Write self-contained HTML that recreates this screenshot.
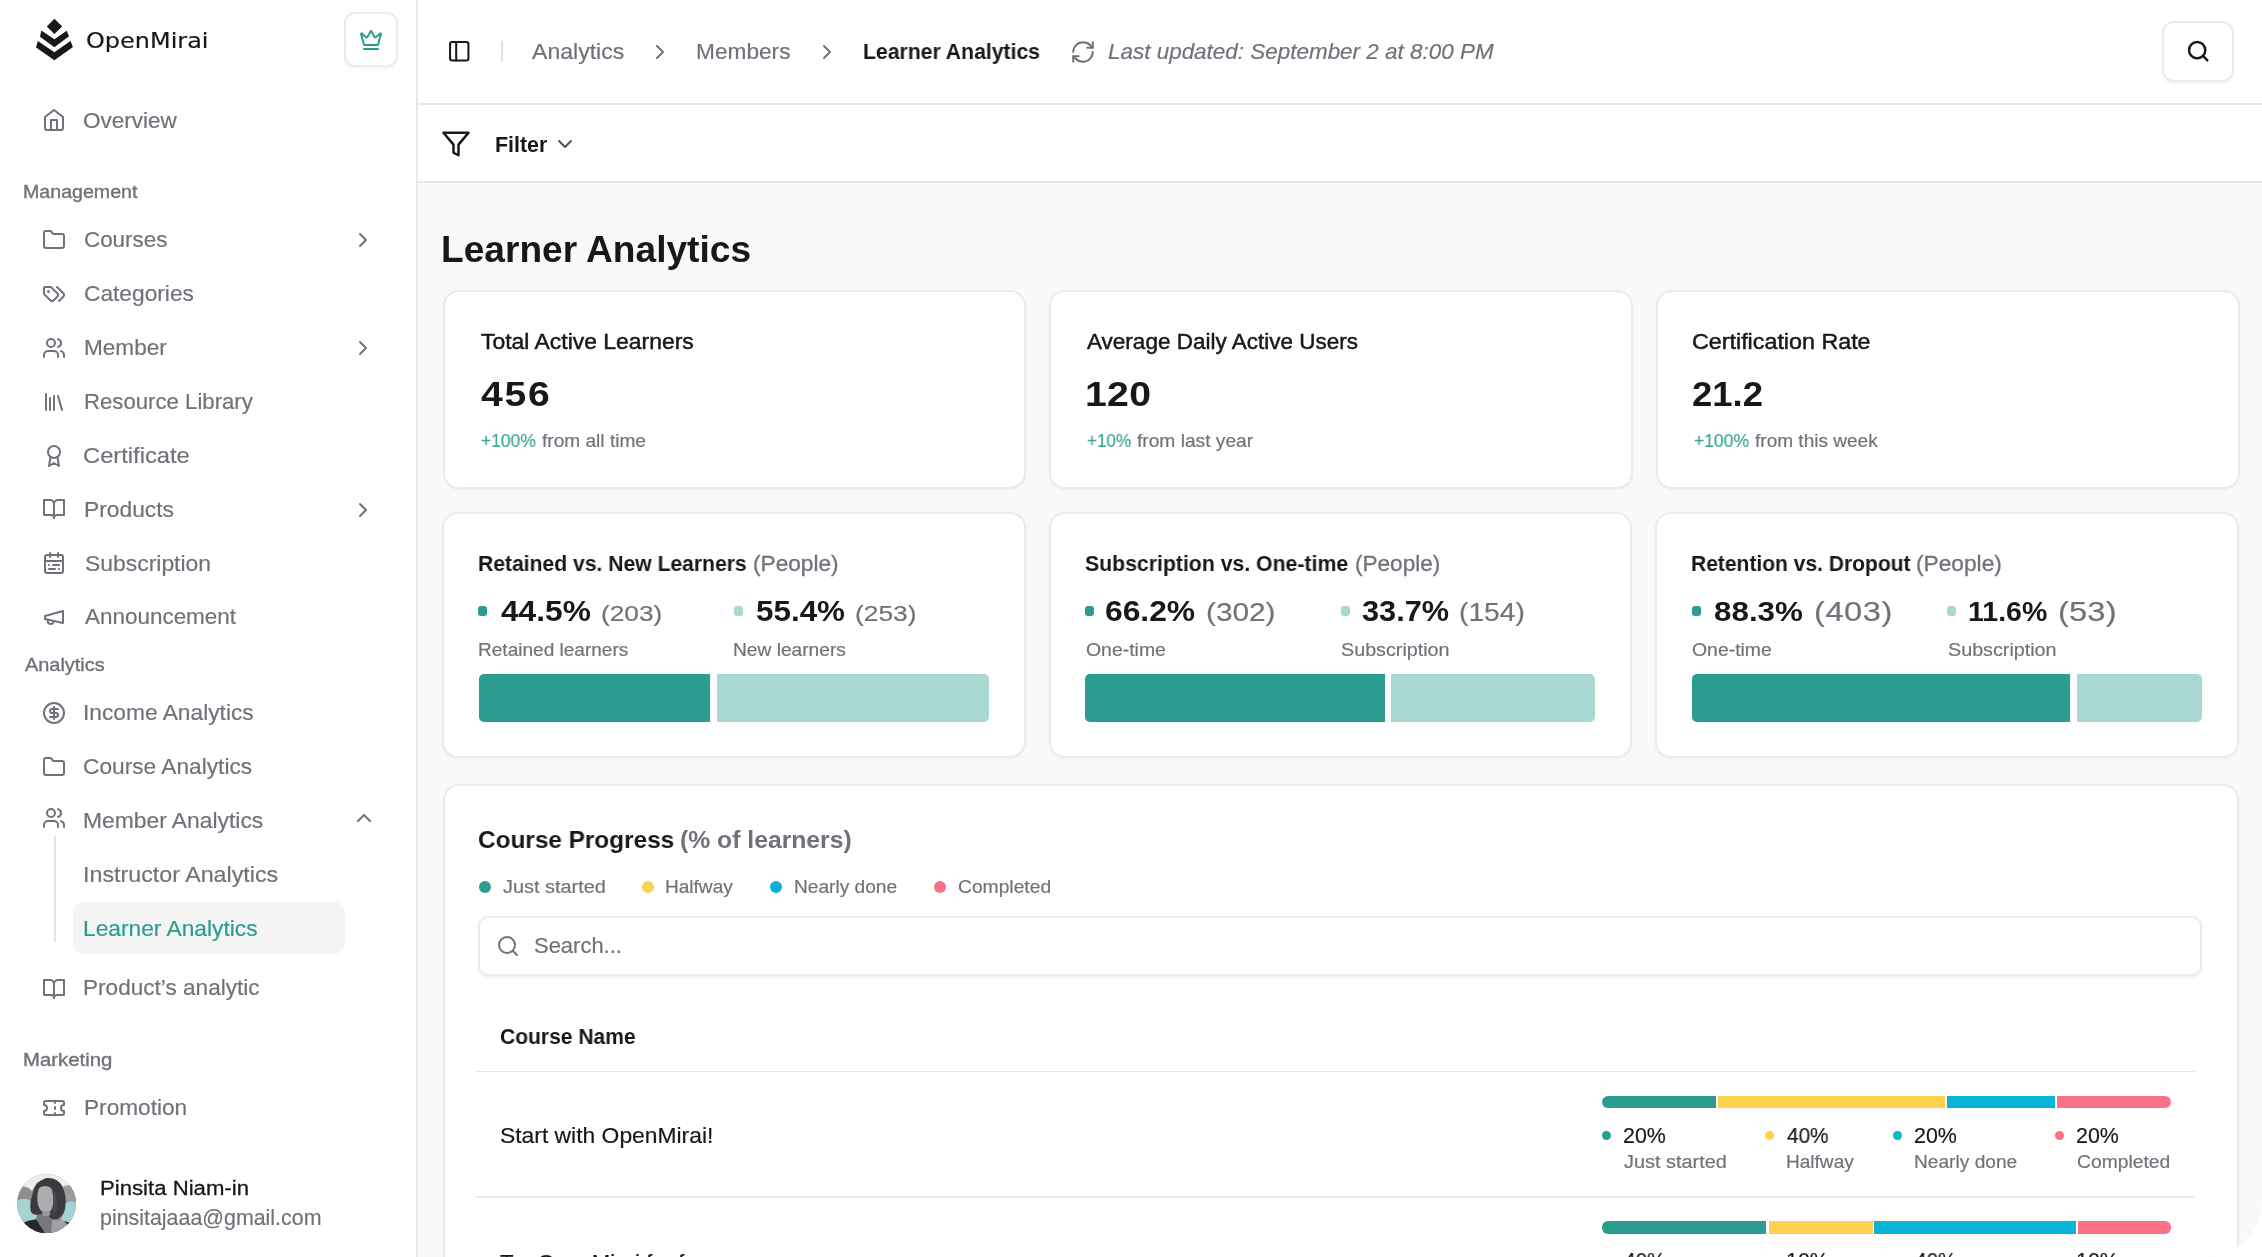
<!DOCTYPE html>
<html lang="en">
<head>
<meta charset="utf-8">
<title>OpenMirai – Learner Analytics</title>
<style>
html,body{margin:0;padding:0;background:#fff;}
body{width:2262px;height:1257px;overflow:hidden;font-family:"Liberation Sans", sans-serif;}
#app{position:absolute;left:0;top:0;width:2262px;height:1257px;overflow:hidden;border-radius:56px;background:#f8f9fa;}
.b{position:absolute;box-sizing:border-box;}
.t{position:absolute;white-space:pre;margin:0;font-weight:400;display:block;transform-origin:0 50%;will-change:transform;}
.ic{position:absolute;overflow:visible;}
</style>
</head>
<body>
<div id="app">
<aside>
<div class="b" style="left:0px;top:0px;width:418px;height:1257px;background:#fff;border-right:2px solid #e8e8ec;"></div>
<div class="b" style="left:343.6px;top:12px;width:54.4px;height:55px;background:#fff;border:2px solid #ebebee;border-radius:11px;box-shadow:0 1.5px 2.5px rgba(24,24,27,.05);"></div>
<div class="b" style="left:72.5px;top:901.7px;width:272.8px;height:52.7px;background:#f4f4f5;border-radius:10px;"></div>
<svg class="ic" style="left:30px;top:12px" width="50" height="54" viewBox="30 12 50 54"><g fill="#18181b">
<path d="M54.4 18.7 62.2 26.4 54.4 34.1 46.8 26.4Z"/>
<path d="M41.3 30.6 54.4 39.2 66.7 30.8 69 36.3 54.4 47.2 40 36.8Z"/>
<path d="M37.8 41 54.4 52.2 70.4 41 73 47 54.4 60.2 36 47.4Z"/>
</g></svg>
<svg class="ic" style="left:17.4px;top:1173.5px" width="59.2" height="59.2" viewBox="0 0 59 59">
<defs><clipPath id="av"><circle cx="29.5" cy="29.5" r="29.5"/></clipPath></defs>
<g clip-path="url(#av)">
<rect width="59" height="59" fill="#8f8f93"/>
<path d="M0 0H59V13Q52 10 46 16L40 8H20L15 17Q8 10 0 14Z" fill="#eceeee"/>
<path d="M45 13Q53 9 59 14V30Q52 24 45 30Z" fill="#9c9ca0"/>
<path d="M0 27Q6 23 12 26L20 30V46L8 48L0 42Z" fill="#a6d3d0"/>
<path d="M59 29Q52 25 47 30L44 46L52 48L59 42Z" fill="#a0d2cf"/>
<path d="M20 40H40L44 59H16Z" fill="#79797d"/>
<path d="M35 46Q45 45 52 49L56 59H34Z" fill="#a2a2a6"/>
<path d="M6 49Q10 46 19 45L28 59H8Z" fill="#27272b"/>
<path d="M47 47L53 48.5L51 51Z" fill="#2c2c30"/>
<path d="M29 4Q40 3 45 12Q50 22 48 34Q47 42 40 45Q33 46 31 40L22 40Q16 42 14 38Q12 30 15 22Q17 8 29 4Z" fill="#3b3b3f"/>
<path d="M22 14Q28 10 34 14Q37 20 36 30Q35 38 29 40Q23 38 21 31Q19 22 22 14Z" fill="#acacaf"/>
<path d="M34 13Q40 18 40 30Q40 40 34 42Q37 34 36 26Q36 18 34 13Z" fill="#4a4a4e"/>
<path d="M25 36Q29 38 33 36L33 41Q29 43 25 41Z" fill="#98989c"/>
</g></svg>
<div class="b" style="left:54px;top:835.7px;width:1.5px;height:106.6px;background:#e4e4e7;"></div>
<svg class="ic" style="left:42.0px;top:108.3px;color:#71717a" width="24" height="24" viewBox="0 0 24 24" fill="none" stroke="currentColor" stroke-width="2" stroke-linecap="round" stroke-linejoin="round"><path d="m3 9 9-7 9 7v11a2 2 0 0 1-2 2H5a2 2 0 0 1-2-2z"/><path d="M9 22V12h6v10"/></svg>
<svg class="ic" style="left:42.0px;top:228.2px;color:#71717a" width="24" height="24" viewBox="0 0 24 24" fill="none" stroke="currentColor" stroke-width="2" stroke-linecap="round" stroke-linejoin="round"><path d="M20 20a2 2 0 0 0 2-2V8a2 2 0 0 0-2-2h-7.9a2 2 0 0 1-1.69-.9L9.6 3.9A2 2 0 0 0 7.93 3H4a2 2 0 0 0-2 2v13a2 2 0 0 0 2 2Z"/></svg>
<svg class="ic" style="left:42.0px;top:282.1px;color:#71717a" width="24" height="24" viewBox="0 0 24 24" fill="none" stroke="currentColor" stroke-width="2" stroke-linecap="round" stroke-linejoin="round"><path d="m15 5 6.3 6.3a2.4 2.4 0 0 1 0 3.4L17 19"/><path d="M9.586 5.586A2 2 0 0 0 8.172 5H3a1 1 0 0 0-1 1v5.172a2 2 0 0 0 .586 1.414L8.29 18.29a2.426 2.426 0 0 0 3.42 0l3.58-3.58a2.426 2.426 0 0 0 0-3.42z"/><circle cx="6.5" cy="9.5" r=".5" fill="currentColor"/></svg>
<svg class="ic" style="left:42.0px;top:335.9px;color:#71717a" width="24" height="24" viewBox="0 0 24 24" fill="none" stroke="currentColor" stroke-width="2" stroke-linecap="round" stroke-linejoin="round"><path d="M16 21v-2a4 4 0 0 0-4-4H6a4 4 0 0 0-4 4v2"/><circle cx="9" cy="7" r="4"/><path d="M22 21v-2a4 4 0 0 0-3-3.87"/><path d="M16 3.13a4 4 0 0 1 0 7.75"/></svg>
<svg class="ic" style="left:42.0px;top:389.8px;color:#71717a" width="24" height="24" viewBox="0 0 24 24" fill="none" stroke="currentColor" stroke-width="2" stroke-linecap="round" stroke-linejoin="round"><path d="m16 6 4 14"/><path d="M12 6v14"/><path d="M8 8v12"/><path d="M4 4v16"/></svg>
<svg class="ic" style="left:42.0px;top:443.6px;color:#71717a" width="24" height="24" viewBox="0 0 24 24" fill="none" stroke="currentColor" stroke-width="2" stroke-linecap="round" stroke-linejoin="round"><circle cx="12" cy="8" r="6"/><path d="M15.477 12.89 17 22l-5-3-5 3 1.523-9.11"/></svg>
<svg class="ic" style="left:42.0px;top:497.4px;color:#71717a" width="24" height="24" viewBox="0 0 24 24" fill="none" stroke="currentColor" stroke-width="2" stroke-linecap="round" stroke-linejoin="round"><path d="M2 3h6a4 4 0 0 1 4 4v14a3 3 0 0 0-3-3H2z"/><path d="M22 3h-6a4 4 0 0 0-4 4v14a3 3 0 0 1 3-3h7z"/></svg>
<svg class="ic" style="left:42.0px;top:551.3px;color:#71717a" width="24" height="24" viewBox="0 0 24 24" fill="none" stroke="currentColor" stroke-width="2" stroke-linecap="round" stroke-linejoin="round"><rect width="18" height="18" x="3" y="4" rx="2"/><path d="M16 2v4"/><path d="M3 10h18"/><path d="M8 2v4"/><path d="M17 14h-6"/><path d="M13 18H7"/><path d="M7 14h.01"/><path d="M17 18h.01"/></svg>
<svg class="ic" style="left:42.0px;top:605.1px;color:#71717a" width="24" height="24" viewBox="0 0 24 24" fill="none" stroke="currentColor" stroke-width="2" stroke-linecap="round" stroke-linejoin="round"><path d="m3 11 18-5v12L3 14v-3z"/><path d="M11.6 16.8a3 3 0 1 1-5.8-1.6"/></svg>
<svg class="ic" style="left:42.0px;top:701.2px;color:#71717a" width="24" height="24" viewBox="0 0 24 24" fill="none" stroke="currentColor" stroke-width="2" stroke-linecap="round" stroke-linejoin="round"><circle cx="12" cy="12" r="10"/><path d="M16 8h-6a2 2 0 1 0 0 4h4a2 2 0 1 1 0 4H8"/><path d="M12 18V6"/></svg>
<svg class="ic" style="left:42.0px;top:755.0px;color:#71717a" width="24" height="24" viewBox="0 0 24 24" fill="none" stroke="currentColor" stroke-width="2" stroke-linecap="round" stroke-linejoin="round"><path d="M20 20a2 2 0 0 0 2-2V8a2 2 0 0 0-2-2h-7.9a2 2 0 0 1-1.69-.9L9.6 3.9A2 2 0 0 0 7.93 3H4a2 2 0 0 0-2 2v13a2 2 0 0 0 2 2Z"/></svg>
<svg class="ic" style="left:42.0px;top:806.2px;color:#71717a" width="24" height="24" viewBox="0 0 24 24" fill="none" stroke="currentColor" stroke-width="2" stroke-linecap="round" stroke-linejoin="round"><path d="M16 21v-2a4 4 0 0 0-4-4H6a4 4 0 0 0-4 4v2"/><circle cx="9" cy="7" r="4"/><path d="M22 21v-2a4 4 0 0 0-3-3.87"/><path d="M16 3.13a4 4 0 0 1 0 7.75"/></svg>
<svg class="ic" style="left:42.0px;top:976.5px;color:#71717a" width="24" height="24" viewBox="0 0 24 24" fill="none" stroke="currentColor" stroke-width="2" stroke-linecap="round" stroke-linejoin="round"><path d="M2 3h6a4 4 0 0 1 4 4v14a3 3 0 0 0-3-3H2z"/><path d="M22 3h-6a4 4 0 0 0-4 4v14a3 3 0 0 1 3-3h7z"/></svg>
<svg class="ic" style="left:41.6px;top:1095.9px;color:#71717a" width="24" height="24" viewBox="0 0 24 24" fill="none" stroke="currentColor" stroke-width="2" stroke-linecap="round" stroke-linejoin="round"><path d="M2 9a3 3 0 0 1 0 6v2a2 2 0 0 0 2 2h16a2 2 0 0 0 2-2v-2a3 3 0 0 1 0-6V7a2 2 0 0 0-2-2H4a2 2 0 0 0-2 2Z"/><path d="M13 5v2"/><path d="M13 17v2"/><path d="M13 11v2"/></svg>
<svg class="ic" style="left:351.3px;top:228.0px;color:#71717a" width="24" height="24" viewBox="0 0 24 24" fill="none" stroke="currentColor" stroke-width="2" stroke-linecap="round" stroke-linejoin="round"><path d="m9 18 6-6-6-6"/></svg>
<svg class="ic" style="left:351.3px;top:336.0px;color:#71717a" width="24" height="24" viewBox="0 0 24 24" fill="none" stroke="currentColor" stroke-width="2" stroke-linecap="round" stroke-linejoin="round"><path d="m9 18 6-6-6-6"/></svg>
<svg class="ic" style="left:351.3px;top:497.7px;color:#71717a" width="24" height="24" viewBox="0 0 24 24" fill="none" stroke="currentColor" stroke-width="2" stroke-linecap="round" stroke-linejoin="round"><path d="m9 18 6-6-6-6"/></svg>
<svg class="ic" style="left:351.5px;top:806.2px;color:#71717a" width="24" height="24" viewBox="0 0 24 24" fill="none" stroke="currentColor" stroke-width="2" stroke-linecap="round" stroke-linejoin="round"><path d="m18 15-6-6-6 6"/></svg>
<svg class="ic" style="left:359.0px;top:27.6px;color:#2a9d8f" width="24" height="24" viewBox="0 0 24 24" fill="none" stroke="currentColor" stroke-width="2" stroke-linecap="round" stroke-linejoin="round"><path d="M11.562 3.266a.5.5 0 0 1 .876 0L15.39 8.87a1 1 0 0 0 1.516.294L21.183 5.5a.5.5 0 0 1 .798.519l-2.834 10.246a1 1 0 0 1-.956.734H5.81a1 1 0 0 1-.957-.734L2.02 6.02a.5.5 0 0 1 .798-.519l4.276 3.664a1 1 0 0 0 1.516-.294z"/><path d="M5 21h14"/></svg>
<span class="t" style="left:86.49px;top:26.90px;font-size:21.6px;line-height:27px;color:#18181b;transform:scaleX(1.1097);font-family:'DejaVu Sans', 'Liberation Sans', sans-serif;-webkit-text-stroke:0.18px #18181b;">OpenMirai</span>
<span class="t" style="left:83.45px;top:107.90px;font-size:21.4px;line-height:27px;color:#71717a;transform:scaleX(1.0530);-webkit-text-stroke:0.18px #71717a;">Overview</span>
<span class="t" style="left:23.42px;top:181.00px;font-size:18.2px;line-height:23px;color:#71717a;transform:scaleX(1.0780);-webkit-text-stroke:0.35px #71717a;">Management</span>
<span class="t" style="left:83.55px;top:227.40px;font-size:21.4px;line-height:27px;color:#71717a;transform:scaleX(1.0468);-webkit-text-stroke:0.18px #71717a;">Courses</span>
<span class="t" style="left:83.54px;top:281.25px;font-size:21.4px;line-height:27px;color:#71717a;transform:scaleX(1.0624);-webkit-text-stroke:0.18px #71717a;">Categories</span>
<span class="t" style="left:83.54px;top:335.10px;font-size:21.4px;line-height:27px;color:#71717a;transform:scaleX(1.0553);-webkit-text-stroke:0.18px #71717a;">Member</span>
<span class="t" style="left:83.56px;top:388.95px;font-size:21.4px;line-height:27px;color:#71717a;transform:scaleX(1.0365);-webkit-text-stroke:0.18px #71717a;">Resource Library</span>
<span class="t" style="left:83.49px;top:442.80px;font-size:21.4px;line-height:27px;color:#71717a;transform:scaleX(1.1092);-webkit-text-stroke:0.18px #71717a;">Certificate</span>
<span class="t" style="left:83.53px;top:496.65px;font-size:21.4px;line-height:27px;color:#71717a;transform:scaleX(1.0663);-webkit-text-stroke:0.18px #71717a;">Products</span>
<span class="t" style="left:84.60px;top:550.50px;font-size:21.4px;line-height:27px;color:#71717a;transform:scaleX(1.0709);-webkit-text-stroke:0.18px #71717a;">Subscription</span>
<span class="t" style="left:84.60px;top:604.35px;font-size:21.4px;line-height:27px;color:#71717a;transform:scaleX(1.0496);-webkit-text-stroke:0.18px #71717a;">Announcement</span>
<span class="t" style="left:24.60px;top:653.90px;font-size:18.2px;line-height:23px;color:#71717a;transform:scaleX(1.0938);-webkit-text-stroke:0.35px #71717a;">Analytics</span>
<span class="t" style="left:83.34px;top:700.20px;font-size:21.4px;line-height:27px;color:#71717a;transform:scaleX(1.0638);-webkit-text-stroke:0.18px #71717a;">Income Analytics</span>
<span class="t" style="left:83.34px;top:754.00px;font-size:21.4px;line-height:27px;color:#71717a;transform:scaleX(1.0617);-webkit-text-stroke:0.18px #71717a;">Course Analytics</span>
<span class="t" style="left:83.33px;top:807.80px;font-size:21.4px;line-height:27px;color:#71717a;transform:scaleX(1.0678);-webkit-text-stroke:0.18px #71717a;">Member Analytics</span>
<span class="t" style="left:83.31px;top:861.80px;font-size:21.4px;line-height:27px;color:#71717a;transform:scaleX(1.0877);-webkit-text-stroke:0.18px #71717a;">Instructor Analytics</span>
<span class="t" style="left:83.34px;top:974.80px;font-size:21.4px;line-height:27px;color:#71717a;transform:scaleX(1.0561);-webkit-text-stroke:0.18px #71717a;">Product’s analytic</span>
<span class="t" style="left:83.34px;top:915.80px;font-size:21.4px;line-height:27px;color:#2a9d8f;transform:scaleX(1.0638);-webkit-text-stroke:0.18px #2a9d8f;">Learner Analytics</span>
<span class="t" style="left:23.28px;top:1049.10px;font-size:18.2px;line-height:23px;color:#71717a;transform:scaleX(1.1191);-webkit-text-stroke:0.35px #71717a;">Marketing</span>
<span class="t" style="left:83.74px;top:1094.90px;font-size:21.4px;line-height:27px;color:#71717a;transform:scaleX(1.0586);-webkit-text-stroke:0.18px #71717a;">Promotion</span>
<span class="t" style="left:99.69px;top:1175.70px;font-size:20px;line-height:25px;color:#18181b;transform:scaleX(1.1076);-webkit-text-stroke:0.28px #18181b;">Pinsita Niam-in</span>
<span class="t" style="left:99.60px;top:1204.50px;font-size:21.4px;line-height:27px;color:#71717a;-webkit-text-stroke:0.18px #71717a;">pinsitajaaa@gmail.com</span>
</aside>
<header>
<div class="b" style="left:418px;top:0px;width:1844px;height:105.2px;background:#fff;border-bottom:2px solid #e8e8ec;"></div>
<div class="b" style="left:418px;top:105.2px;width:1844px;height:78px;background:#fff;border-bottom:2px solid #e8e8ec;"></div>
<div class="b" style="left:2161.6px;top:21.3px;width:72.2px;height:60.3px;background:#fff;border:2px solid #ebebee;border-radius:12px;box-shadow:0 1.5px 2.5px rgba(24,24,27,.05);"></div>
<div class="b" style="left:501px;top:41px;width:1.5px;height:21px;background:#e2e2e6;"></div>
<svg class="ic" style="left:446.9px;top:39.2px;color:#18181b" width="24.5" height="24.5" viewBox="0 0 24 24" fill="none" stroke="currentColor" stroke-width="2" stroke-linecap="round" stroke-linejoin="round"><rect width="18" height="18" x="3" y="3" rx="2"/><path d="M9 3v18"/></svg>
<svg class="ic" style="left:648.0px;top:40.0px;color:#71717a" width="24" height="24" viewBox="0 0 24 24" fill="none" stroke="currentColor" stroke-width="2" stroke-linecap="round" stroke-linejoin="round"><path d="m9 18 6-6-6-6"/></svg>
<svg class="ic" style="left:815.3px;top:40.0px;color:#71717a" width="24" height="24" viewBox="0 0 24 24" fill="none" stroke="currentColor" stroke-width="2" stroke-linecap="round" stroke-linejoin="round"><path d="m9 18 6-6-6-6"/></svg>
<svg class="ic" style="left:1070.2px;top:38.5px;color:#71717a" width="26" height="26" viewBox="0 0 24 24" fill="none" stroke="currentColor" stroke-width="1.85" stroke-linecap="round" stroke-linejoin="round"><path d="M3 12a9 9 0 0 1 9-9 9.75 9.75 0 0 1 6.74 2.74L21 8"/><path d="M21 3v5h-5"/><path d="M21 12a9 9 0 0 1-9 9 9.75 9.75 0 0 1-6.74-2.74L3 16"/><path d="M8 16H3v5"/></svg>
<svg class="ic" style="left:2185.5px;top:39.4px;color:#18181b" width="24.4" height="24.4" viewBox="0 0 24 24" fill="none" stroke="currentColor" stroke-width="2.4" stroke-linecap="round" stroke-linejoin="round"><circle cx="11" cy="11" r="8"/><path d="m21 21-4.3-4.3"/></svg>
<svg class="ic" style="left:441.4px;top:129.0px;color:#18181b" width="30" height="30" viewBox="0 0 24 24" fill="none" stroke="currentColor" stroke-width="2" stroke-linecap="round" stroke-linejoin="round"><polygon points="22 3 2 3 10 12.46 10 19 14 21 14 12.46 22 3"/></svg>
<svg class="ic" style="left:553.4px;top:132.3px;color:#52525b" width="24" height="24" viewBox="0 0 24 24" fill="none" stroke="currentColor" stroke-width="2" stroke-linecap="round" stroke-linejoin="round"><path d="m6 9 6 6 6-6"/></svg>
<span class="t" style="left:531.50px;top:38.90px;font-size:21.4px;line-height:27px;color:#71717a;transform:scaleX(1.0778);-webkit-text-stroke:0.18px #71717a;">Analytics</span>
<span class="t" style="left:695.54px;top:38.90px;font-size:21.4px;line-height:27px;color:#71717a;transform:scaleX(1.0600);-webkit-text-stroke:0.18px #71717a;">Members</span>
<span class="t" style="left:862.71px;top:38.90px;font-size:21.4px;line-height:27px;color:#18181b;transform:scaleX(0.9903);font-weight:700;">Learner Analytics</span>
<span class="t" style="left:1107.80px;top:39.00px;font-size:21.4px;line-height:27px;color:#71717a;transform:scaleX(1.0494);font-style:italic;-webkit-text-stroke:0.18px #71717a;">Last updated: September 2 at 8:00 PM</span>
<span class="t" style="left:494.91px;top:131.80px;font-size:21.4px;line-height:27px;color:#18181b;transform:scaleX(0.9927);font-weight:700;">Filter</span>
</header>
<main>
<div class="b" style="left:442.6px;top:289.8px;width:583.8px;height:199.3px;background:#fff;border:2px solid #ebebee;border-radius:16px;box-shadow:0 1px 2px rgba(24,24,27,.04);"></div>
<div class="b" style="left:1049.3px;top:289.8px;width:583.8px;height:199.3px;background:#fff;border:2px solid #ebebee;border-radius:16px;box-shadow:0 1px 2px rgba(24,24,27,.04);"></div>
<div class="b" style="left:1656.0px;top:289.8px;width:583.8px;height:199.3px;background:#fff;border:2px solid #ebebee;border-radius:16px;box-shadow:0 1px 2px rgba(24,24,27,.04);"></div>
<div class="b" style="left:441.9px;top:511.5px;width:583.9px;height:246.2px;background:#fff;border:2px solid #ebebee;border-radius:16px;box-shadow:0 1px 2px rgba(24,24,27,.04);"></div>
<div class="b" style="left:1048.6px;top:511.5px;width:583.9px;height:246.2px;background:#fff;border:2px solid #ebebee;border-radius:16px;box-shadow:0 1px 2px rgba(24,24,27,.04);"></div>
<div class="b" style="left:1655.3px;top:511.5px;width:583.9px;height:246.2px;background:#fff;border:2px solid #ebebee;border-radius:16px;box-shadow:0 1px 2px rgba(24,24,27,.04);"></div>
<div class="b" style="left:442.9px;top:783.5px;width:1795.9px;height:520px;background:#fff;border:2px solid #ebebee;border-radius:16px;box-shadow:0 1px 2px rgba(24,24,27,.04);"></div>
<div class="b" style="left:478.8px;top:674px;width:231.59999999999997px;height:47.5px;background:#2a9d8f;border-radius:5px 0 0 5px;"></div>
<div class="b" style="left:716.7px;top:674px;width:272.0px;height:47.5px;background:#a9d8d3;border-radius:0 5px 5px 0;"></div>
<div class="b" style="left:1085.2px;top:674px;width:300.20000000000005px;height:47.5px;background:#2a9d8f;border-radius:5px 0 0 5px;"></div>
<div class="b" style="left:1391.4px;top:674px;width:204.0px;height:47.5px;background:#a9d8d3;border-radius:0 5px 5px 0;"></div>
<div class="b" style="left:1692.2px;top:674px;width:378.29999999999995px;height:47.5px;background:#2a9d8f;border-radius:5px 0 0 5px;"></div>
<div class="b" style="left:2076.8px;top:674px;width:125.19999999999982px;height:47.5px;background:#a9d8d3;border-radius:0 5px 5px 0;"></div>
<div class="b" style="left:478.1px;top:606.4px;width:9.2px;height:9.2px;background:#2a9d8f;border-radius:3px;"></div>
<div class="b" style="left:733.9px;top:606.4px;width:9.2px;height:9.2px;background:#a9d8d3;border-radius:3px;"></div>
<div class="b" style="left:1084.9px;top:606.4px;width:9.2px;height:9.2px;background:#2a9d8f;border-radius:3px;"></div>
<div class="b" style="left:1340.9px;top:606.4px;width:9.2px;height:9.2px;background:#a9d8d3;border-radius:3px;"></div>
<div class="b" style="left:1691.8px;top:606.4px;width:9.2px;height:9.2px;background:#2a9d8f;border-radius:3px;"></div>
<div class="b" style="left:1947.3px;top:606.4px;width:9.2px;height:9.2px;background:#a9d8d3;border-radius:3px;"></div>
<div class="b" style="left:478.5px;top:880.6px;width:12px;height:12px;background:#2a9d8f;border-radius:50%;"></div>
<div class="b" style="left:641.7px;top:880.6px;width:12px;height:12px;background:#fdd24f;border-radius:50%;"></div>
<div class="b" style="left:770.2px;top:880.6px;width:12px;height:12px;background:#09b4d6;border-radius:50%;"></div>
<div class="b" style="left:933.8px;top:880.6px;width:12px;height:12px;background:#f97187;border-radius:50%;"></div>
<div class="b" style="left:478.2px;top:915.6px;width:1723.8px;height:60.4px;background:#fff;border:2px solid #ebebee;border-radius:10px;box-shadow:0 1.5px 2.5px rgba(24,24,27,.06);"></div>
<div class="b" style="left:476px;top:1070.5px;width:1719px;height:1.5px;background:#e8e8ec;"></div>
<div class="b" style="left:476px;top:1196px;width:1719px;height:1.5px;background:#e8e8ec;"></div>
<div class="b" style="left:1601.9px;top:1095.7px;width:113.89999999999986px;height:12.4px;background:#2a9d8f;border-radius:6px 0 0 6px;"></div>
<div class="b" style="left:1717.7px;top:1095.7px;width:227.20000000000005px;height:12.4px;background:#fdd24f;border-radius:0;"></div>
<div class="b" style="left:1946.7px;top:1095.7px;width:108.60000000000014px;height:12.4px;background:#09b4d6;border-radius:0;"></div>
<div class="b" style="left:2056.9px;top:1095.7px;width:113.90000000000009px;height:12.4px;background:#f97187;border-radius:0 6px 6px 0;"></div>
<div class="b" style="left:1601.9px;top:1221.4px;width:164.5px;height:12.4px;background:#2a9d8f;border-radius:6px 0 0 6px;"></div>
<div class="b" style="left:1768.6px;top:1221.4px;width:104.20000000000005px;height:12.4px;background:#fdd24f;border-radius:0;"></div>
<div class="b" style="left:1874.4px;top:1221.4px;width:201.69999999999982px;height:12.4px;background:#09b4d6;border-radius:0;"></div>
<div class="b" style="left:2077.7px;top:1221.4px;width:93.10000000000036px;height:12.4px;background:#f97187;border-radius:0 6px 6px 0;"></div>
<div class="b" style="left:1602.1px;top:1130.6px;width:9.0px;height:9.0px;background:#2a9d8f;border-radius:50%;"></div>
<div class="b" style="left:1602.1px;top:1256.5px;width:9.0px;height:9.0px;background:#2a9d8f;border-radius:50%;"></div>
<div class="b" style="left:1765.0px;top:1130.6px;width:9.0px;height:9.0px;background:#fdd24f;border-radius:50%;"></div>
<div class="b" style="left:1765.0px;top:1256.5px;width:9.0px;height:9.0px;background:#fdd24f;border-radius:50%;"></div>
<div class="b" style="left:1892.9px;top:1130.6px;width:9.0px;height:9.0px;background:#09b4d6;border-radius:50%;"></div>
<div class="b" style="left:1892.9px;top:1256.5px;width:9.0px;height:9.0px;background:#09b4d6;border-radius:50%;"></div>
<div class="b" style="left:2055.2px;top:1130.6px;width:9.0px;height:9.0px;background:#f97187;border-radius:50%;"></div>
<div class="b" style="left:2055.2px;top:1256.5px;width:9.0px;height:9.0px;background:#f97187;border-radius:50%;"></div>
<svg class="ic" style="left:496.4px;top:933.9px;color:#71717a" width="24" height="24" viewBox="0 0 24 24" fill="none" stroke="currentColor" stroke-width="2" stroke-linecap="round" stroke-linejoin="round"><circle cx="11" cy="11" r="8"/><path d="m21 21-4.3-4.3"/></svg>
<h1 class="t" style="left:441.37px;top:227.40px;font-size:36.5px;line-height:46px;color:#18181b;transform:scaleX(1.0167);font-weight:700;">Learner Analytics</h1>
<span class="t" style="left:480.50px;top:329.10px;font-size:21.4px;line-height:27px;color:#18181b;transform:scaleX(1.0716);-webkit-text-stroke:0.45px #18181b;">Total Active Learners</span>
<span class="t" style="left:480.80px;top:372.00px;font-size:35px;line-height:44px;color:#18181b;transform:scaleX(1.1200);letter-spacing:1.526px;font-weight:700;">456</span>
<span class="t" style="left:481.10px;top:428.80px;font-size:18.3px;line-height:23px;color:#3aa597;transform:scaleX(0.9549);-webkit-text-stroke:0.18px #3aa597;">+100%</span>
<span class="t" style="left:542.00px;top:428.80px;font-size:18.3px;line-height:23px;color:#71717a;transform:scaleX(1.0445);-webkit-text-stroke:0.18px #71717a;">from all time</span>
<span class="t" style="left:1086.50px;top:329.10px;font-size:21.4px;line-height:27px;color:#18181b;transform:scaleX(1.0520);-webkit-text-stroke:0.45px #18181b;">Average Daily Active Users</span>
<span class="t" style="left:1084.56px;top:372.00px;font-size:35px;line-height:44px;color:#18181b;transform:scaleX(1.1200);letter-spacing:0.249px;font-weight:700;">120</span>
<span class="t" style="left:1087.10px;top:428.80px;font-size:18.3px;line-height:23px;color:#3aa597;transform:scaleX(0.9338);-webkit-text-stroke:0.18px #3aa597;">+10%</span>
<span class="t" style="left:1137.00px;top:428.80px;font-size:18.3px;line-height:23px;color:#71717a;transform:scaleX(1.0484);-webkit-text-stroke:0.18px #71717a;">from last year</span>
<span class="t" style="left:1691.91px;top:329.10px;font-size:21.4px;line-height:27px;color:#18181b;transform:scaleX(1.0884);-webkit-text-stroke:0.45px #18181b;">Certification Rate</span>
<span class="t" style="left:1692.26px;top:372.00px;font-size:35px;line-height:44px;color:#18181b;transform:scaleX(1.0427);font-weight:700;">21.2</span>
<span class="t" style="left:1693.60px;top:428.80px;font-size:18.3px;line-height:23px;color:#3aa597;transform:scaleX(0.9567);-webkit-text-stroke:0.18px #3aa597;">+100%</span>
<span class="t" style="left:1755.40px;top:428.80px;font-size:18.3px;line-height:23px;color:#71717a;transform:scaleX(1.0412);-webkit-text-stroke:0.18px #71717a;">from this week</span>
<span class="t" style="left:477.81px;top:550.70px;font-size:21.4px;line-height:27px;color:#18181b;transform:scaleX(0.9869);font-weight:700;">Retained vs. New Learners</span>
<span class="t" style="left:753.24px;top:550.70px;font-size:21.4px;line-height:27px;color:#71717a;transform:scaleX(1.0581);-webkit-text-stroke:0.3px #71717a;">(People)</span>
<span class="t" style="left:500.50px;top:592.40px;font-size:29.6px;line-height:37px;color:#18181b;transform:scaleX(1.0706);font-weight:700;">44.5%</span>
<span class="t" style="left:600.65px;top:599.40px;font-size:22.8px;line-height:28px;color:#71717a;transform:scaleX(1.1506);-webkit-text-stroke:0.18px #71717a;">(203)</span>
<span class="t" style="left:755.70px;top:592.40px;font-size:29.6px;line-height:37px;color:#18181b;transform:scaleX(1.0610);font-weight:700;">55.4%</span>
<span class="t" style="left:854.65px;top:599.40px;font-size:22.8px;line-height:28px;color:#71717a;transform:scaleX(1.1544);-webkit-text-stroke:0.18px #71717a;">(253)</span>
<span class="t" style="left:477.56px;top:637.60px;font-size:18.3px;line-height:23px;color:#71717a;transform:scaleX(1.0415);-webkit-text-stroke:0.18px #71717a;">Retained learners</span>
<span class="t" style="left:733.15px;top:637.60px;font-size:18.3px;line-height:23px;color:#71717a;transform:scaleX(1.0483);-webkit-text-stroke:0.18px #71717a;">New learners</span>
<span class="t" style="left:1085.20px;top:550.70px;font-size:21.4px;line-height:27px;color:#18181b;transform:scaleX(0.9926);font-weight:700;">Subscription vs. One-time</span>
<span class="t" style="left:1354.75px;top:550.70px;font-size:21.4px;line-height:27px;color:#71717a;transform:scaleX(1.0543);-webkit-text-stroke:0.3px #71717a;">(People)</span>
<span class="t" style="left:1105.43px;top:592.40px;font-size:29.6px;line-height:37px;color:#18181b;transform:scaleX(1.0739);font-weight:700;">66.2%</span>
<span class="t" style="left:1206.23px;top:596.40px;font-size:25.5px;line-height:32px;color:#71717a;transform:scaleX(1.1677);-webkit-text-stroke:0.18px #71717a;">(302)</span>
<span class="t" style="left:1362.30px;top:592.40px;font-size:29.6px;line-height:37px;color:#18181b;transform:scaleX(1.0371);font-weight:700;">33.7%</span>
<span class="t" style="left:1459.49px;top:596.40px;font-size:25.5px;line-height:32px;color:#71717a;transform:scaleX(1.1080);-webkit-text-stroke:0.18px #71717a;">(154)</span>
<span class="t" style="left:1085.50px;top:637.60px;font-size:18.3px;line-height:23px;color:#71717a;transform:scaleX(1.0625);-webkit-text-stroke:0.18px #71717a;">One-time</span>
<span class="t" style="left:1341.00px;top:637.60px;font-size:18.3px;line-height:23px;color:#71717a;transform:scaleX(1.0791);-webkit-text-stroke:0.18px #71717a;">Subscription</span>
<span class="t" style="left:1691.22px;top:550.70px;font-size:21.4px;line-height:27px;color:#18181b;transform:scaleX(0.9825);font-weight:700;">Retention vs. Dropout</span>
<span class="t" style="left:1916.44px;top:550.70px;font-size:21.4px;line-height:27px;color:#71717a;transform:scaleX(1.0619);-webkit-text-stroke:0.3px #71717a;">(People)</span>
<span class="t" style="left:1714.20px;top:593.40px;font-size:28.5px;line-height:36px;color:#18181b;transform:scaleX(1.1010);font-weight:700;">88.3%</span>
<span class="t" style="left:1813.60px;top:595.40px;font-size:27.2px;line-height:34px;color:#71717a;transform:scaleX(1.2000);letter-spacing:0.459px;-webkit-text-stroke:0.18px #71717a;">(403)</span>
<span class="t" style="left:1968.20px;top:593.40px;font-size:28.5px;line-height:36px;color:#18181b;font-weight:700;">11.6%</span>
<span class="t" style="left:2058.00px;top:595.40px;font-size:27.2px;line-height:34px;color:#71717a;transform:scaleX(1.2000);letter-spacing:0.152px;-webkit-text-stroke:0.18px #71717a;">(53)</span>
<span class="t" style="left:1692.40px;top:637.60px;font-size:18.3px;line-height:23px;color:#71717a;transform:scaleX(1.0612);-webkit-text-stroke:0.18px #71717a;">One-time</span>
<span class="t" style="left:1947.80px;top:637.60px;font-size:18.3px;line-height:23px;color:#71717a;transform:scaleX(1.0791);-webkit-text-stroke:0.18px #71717a;">Subscription</span>
<h2 class="t" style="left:477.91px;top:824.40px;font-size:24.5px;line-height:31px;color:#18181b;transform:scaleX(0.9938);font-weight:700;">Course Progress</h2>
<span class="t" style="left:680.49px;top:824.40px;font-size:24.5px;line-height:31px;color:#71717a;transform:scaleX(1.0088);font-weight:700;">(% of learners)</span>
<span class="t" style="left:502.80px;top:875.00px;font-size:18.3px;line-height:23px;color:#71717a;transform:scaleX(1.0876);-webkit-text-stroke:0.18px #71717a;">Just started</span>
<span class="t" style="left:664.96px;top:875.00px;font-size:18.3px;line-height:23px;color:#71717a;transform:scaleX(1.0419);-webkit-text-stroke:0.18px #71717a;">Halfway</span>
<span class="t" style="left:793.85px;top:875.00px;font-size:18.3px;line-height:23px;color:#71717a;transform:scaleX(1.0461);-webkit-text-stroke:0.18px #71717a;">Nearly done</span>
<span class="t" style="left:958.10px;top:875.00px;font-size:18.3px;line-height:23px;color:#71717a;transform:scaleX(1.0534);-webkit-text-stroke:0.18px #71717a;">Completed</span>
<span class="t" style="left:533.50px;top:933.40px;font-size:21.4px;line-height:27px;color:#71717a;transform:scaleX(1.0268);-webkit-text-stroke:0.18px #71717a;">Search...</span>
<span class="t" style="left:500.40px;top:1023.80px;font-size:21.4px;line-height:27px;color:#18181b;transform:scaleX(0.9833);font-weight:700;">Course Name</span>
<span class="t" style="left:500.40px;top:1122.90px;font-size:21.4px;line-height:27px;color:#18181b;transform:scaleX(1.0684);-webkit-text-stroke:0.18px #18181b;">Start with OpenMirai!</span>
<span class="t" style="left:500.40px;top:1249.60px;font-size:21.4px;line-height:27px;color:#18181b;transform:scaleX(1.0390);-webkit-text-stroke:0.18px #18181b;">Try OpenMirai for free</span>
<span class="t" style="left:1622.61px;top:1122.50px;font-size:21.4px;line-height:27px;color:#18181b;transform:scaleX(0.9930);-webkit-text-stroke:0.18px #18181b;">20%</span>
<span class="t" style="left:1623.60px;top:1150.00px;font-size:18.3px;line-height:23px;color:#71717a;transform:scaleX(1.0876);-webkit-text-stroke:0.18px #71717a;">Just started</span>
<span class="t" style="left:1623.60px;top:1248.30px;font-size:21.4px;line-height:27px;color:#18181b;transform:scaleX(0.9698);-webkit-text-stroke:0.18px #18181b;">40%</span>
<span class="t" style="left:1786.60px;top:1122.50px;font-size:21.4px;line-height:27px;color:#18181b;transform:scaleX(0.9698);-webkit-text-stroke:0.18px #18181b;">40%</span>
<span class="t" style="left:1785.56px;top:1150.00px;font-size:18.3px;line-height:23px;color:#71717a;transform:scaleX(1.0419);-webkit-text-stroke:0.18px #71717a;">Halfway</span>
<span class="t" style="left:1785.61px;top:1248.30px;font-size:21.4px;line-height:27px;color:#18181b;transform:scaleX(0.9930);-webkit-text-stroke:0.18px #18181b;">10%</span>
<span class="t" style="left:1913.71px;top:1122.50px;font-size:21.4px;line-height:27px;color:#18181b;transform:scaleX(0.9930);-webkit-text-stroke:0.18px #18181b;">20%</span>
<span class="t" style="left:1913.65px;top:1150.00px;font-size:18.3px;line-height:23px;color:#71717a;transform:scaleX(1.0472);-webkit-text-stroke:0.18px #71717a;">Nearly done</span>
<span class="t" style="left:1914.70px;top:1248.30px;font-size:21.4px;line-height:27px;color:#18181b;transform:scaleX(0.9698);-webkit-text-stroke:0.18px #18181b;">40%</span>
<span class="t" style="left:2075.81px;top:1122.50px;font-size:21.4px;line-height:27px;color:#18181b;transform:scaleX(0.9930);-webkit-text-stroke:0.18px #18181b;">20%</span>
<span class="t" style="left:2076.80px;top:1150.00px;font-size:18.3px;line-height:23px;color:#71717a;transform:scaleX(1.0546);-webkit-text-stroke:0.18px #71717a;">Completed</span>
<span class="t" style="left:2075.81px;top:1248.30px;font-size:21.4px;line-height:27px;color:#18181b;transform:scaleX(0.9930);-webkit-text-stroke:0.18px #18181b;">10%</span>
</main>
</div>
</body>
</html>
